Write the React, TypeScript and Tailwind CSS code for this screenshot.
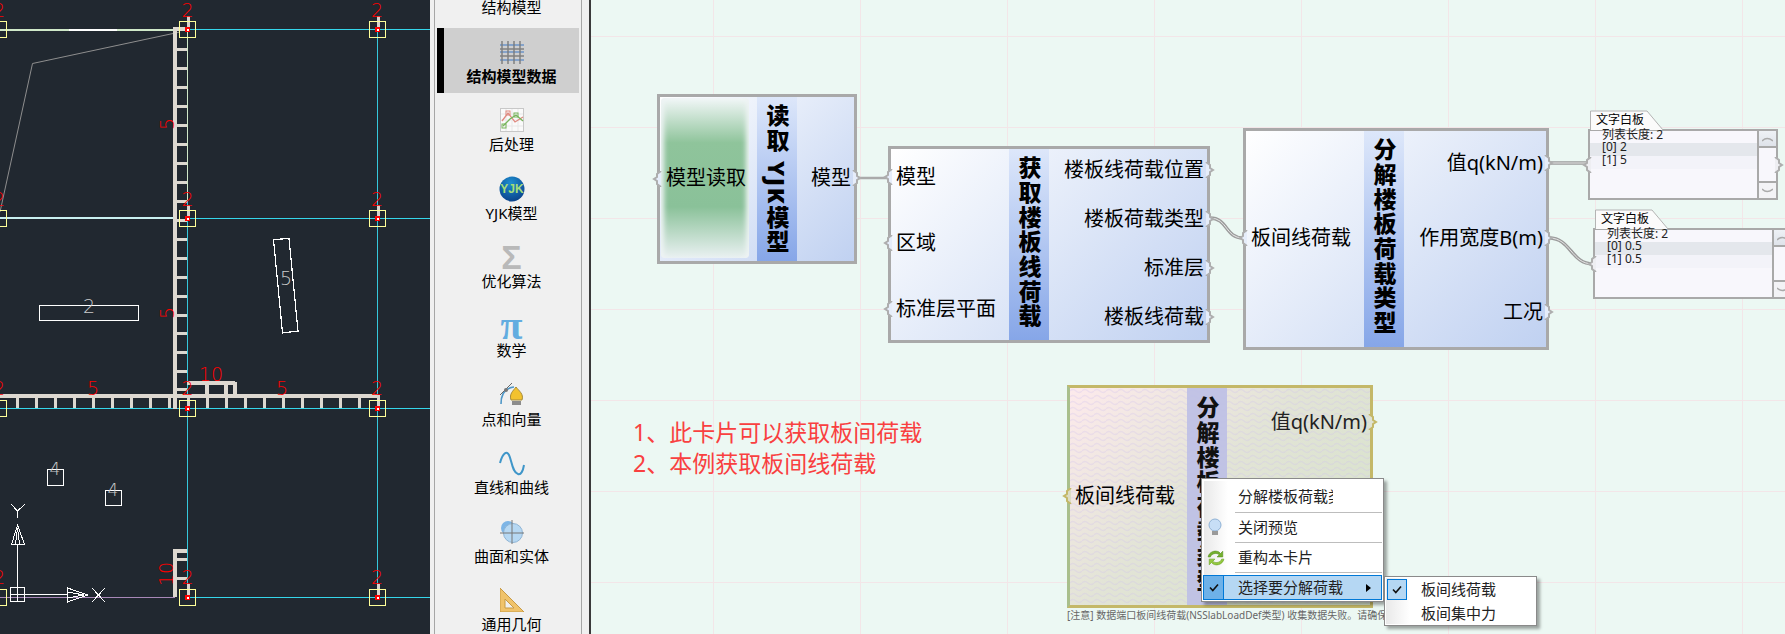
import React from 'react';

const FONT = "font-['Noto_Sans','Noto_Sans_CJK_SC',sans-serif]";

const Notch = ({ side, fill = '#e6edfa', stroke = '#aeaeae' }: { side: 'l' | 'r'; fill?: string; stroke?: string }) => (
  <svg
    width="10"
    height="16"
    viewBox="0 0 10 16"
    className={side === 'r' ? 'absolute right-[-8px] top-1/2 -translate-y-1/2' : 'absolute left-[-8px] top-1/2 -translate-y-1/2 -scale-x-100'}
  >
    <path d="M1 0 L5 3 V6 L8 8 L5 10 V13 L1 16" fill={fill} stroke={stroke} strokeWidth="2" />
  </svg>
);

const Port = ({ label, side, h, fill, stroke }: { label: string; side: 'l' | 'r'; h: string; fill?: string; stroke?: string }) => (
  <div className={`relative flex shrink-0 items-center text-[20px] leading-none text-black ${h} ${side === 'r' ? 'justify-end pr-[3px]' : 'justify-start pl-[5px]'}`}>
    <span className="whitespace-nowrap">{label}</span>
    <Notch side={side} fill={fill} stroke={stroke} />
  </div>
);

const Strip = ({ text }: { text: string }) => (
  <div className="flex w-[40px] shrink-0 justify-center bg-[linear-gradient(to_bottom,#dde7fa,#86a6e8)] pt-[7px]">
    <span className="text-[23px] font-black leading-[30px] tracking-[1.7px] text-black [writing-mode:vertical-rl]">{text}</span>
  </div>
);

const NODE = 'absolute flex border-[3px] border-[#a9a9a9] bg-[linear-gradient(135deg,#ffffff,#c0d1f1)]';
const COL = 'flex flex-col justify-center pb-[3px]';

const Wire = ({ d }: { d: string }) => (
  <g fill="none">
    <path d={d} stroke="#9c9c9c" strokeWidth="3.5" />
    <path d={d} stroke="#e8e8e8" strokeWidth="1" />
  </g>
);

const Canvas = () => (
  <div className={`relative h-full flex-1 overflow-hidden bg-[#ecf8f3] bg-[linear-gradient(#f3e6e8_1px,transparent_1px),linear-gradient(90deg,#f3e6e8_1px,transparent_1px)] bg-[size:147px_91px] bg-[position:122px_36px] ${FONT}`}>
    <svg width="1194" height="634" className="absolute left-0 top-0">
      <path d="M266 178 H297" fill="none" stroke="#aaaaaa" strokeWidth="2.5" />
      <Wire d="M619 218 C637 218 634 238 652 238" />
      <Wire d="M958 163 H997" />
      <Wire d="M958 238 C980 238 980 264 1002 264" />
    </svg>

    {/* 读取YJK模型 */}
    <div className={`${NODE} left-[66px] top-[94px] h-[170px] w-[200px]`}>
      <div className="relative flex w-[97px] shrink-0 items-center pb-[3px]">
        <div className="absolute bottom-[3px] left-[1px] top-[1px] w-[88px] rounded-[4px] bg-[linear-gradient(to_bottom,#f2f7f8,#8fc49b_28%,#8ac199_68%,#eaf1f2)] shadow-[inset_6px_0_5px_-3px_#eef3f4,inset_-6px_0_5px_-3px_#eef3f4]" />
        <span className="relative whitespace-nowrap pl-[6px] text-[20px] leading-none text-black">模型读取</span>
        <Notch side="l" />
      </div>
      <Strip text="读取 YJK模型" />
      <div className={`${COL} flex-1`}>
        <Port label="模型" side="r" h="h-[40px]" />
      </div>
    </div>

    {/* 获取楼板线荷载 */}
    <div className={`${NODE} left-[297px] top-[146px] h-[197px] w-[322px]`}>
      <div className={`${COL} w-[118px] shrink-0`}>
        <Port label="模型" side="l" h="h-[66px]" />
        <Port label="区域" side="l" h="h-[66px]" />
        <Port label="标准层平面" side="l" h="h-[66px]" />
      </div>
      <Strip text="获取楼板线荷载" />
      <div className={`${COL} flex-1`}>
        <Port label="楼板线荷载位置" side="r" h="h-[49px]" />
        <Port label="楼板荷载类型" side="r" h="h-[49px]" />
        <Port label="标准层" side="r" h="h-[49px]" />
        <Port label="楼板线荷载" side="r" h="h-[49px]" />
      </div>
    </div>

    {/* 分解楼板荷载类型 */}
    <div className={`${NODE} left-[652px] top-[128px] h-[222px] w-[306px]`}>
      <div className={`${COL} w-[118px] shrink-0`}>
        <Port label="板间线荷载" side="l" h="h-[74px]" />
      </div>
      <Strip text="分解楼板荷载类型" />
      <div className={`${COL} flex-1`}>
        <Port label="值q(kN/m)" side="r" h="h-[74.5px]" />
        <Port label="作用宽度B(m)" side="r" h="h-[74.5px]" />
        <Port label="工况" side="r" h="h-[74.5px]" />
      </div>
    </div>

    <TextPanel className="left-[997px] top-[129px] w-[190px]" rows={['[0] 2', '[1] 5']} />
    <TextPanel className="left-[1002px] top-[228px] w-[200px]" rows={['[0] 0.5', '[1] 0.5']} />

    {/* 红色说明文字 */}
    <div className="absolute left-[42px] top-[417px] text-[23px] leading-[30.5px] text-[#f94040]">
      <div>1、此卡片可以获取板间荷载</div>
      <div>2、本例获取板间线荷载</div>
    </div>

    {/* 预览中的卡片 */}
    <div className="absolute left-[476px] top-[385px] flex h-[223px] w-[306px] border-[3px] border-[#c4b868] border-l-[#a9bf8c] bg-[linear-gradient(135deg,#fdeaec,#e2e4d6_45%,#d5e2c9)]">
      <svg className="absolute inset-0 h-full w-full">
        <defs>
          <pattern id="wave" width="12" height="6" patternUnits="userSpaceOnUse">
            <path d="M0 3 Q3 0 6 3 T12 3" fill="none" stroke="#cdbcec" strokeOpacity="0.28" strokeWidth="1.4" />
          </pattern>
        </defs>
        <rect width="100%" height="100%" fill="url(#wave)" />
      </svg>
      <div className="relative flex w-[117px] shrink-0 flex-col">
        <Port label="板间线荷载" side="l" h="h-[215px]" fill="#dcdcc4" stroke="#c4b868" />
      </div>
      <div className="relative flex w-[40px] shrink-0 justify-center bg-[#bcbfe6]/90 pt-[8px]">
        <span className="text-[23px] font-black leading-[30px] tracking-[1.7px] text-[#111] [writing-mode:vertical-rl]">分解楼板荷载类型</span>
      </div>
      <div className="relative flex flex-1 flex-col">
        <div className="relative flex h-[68px] items-center justify-end pr-[3px] text-[20px] leading-none text-[#222]">
          值q(kN/m)
          <Notch side="r" fill="#dfe2d2" stroke="#c4b868" />
        </div>
      </div>
    </div>
    <div className="absolute left-[476px] top-[609px] h-[13px] w-[317px] overflow-hidden whitespace-nowrap text-[10px] leading-[12px] text-[#666]">
      [注意] 数据端口板间线荷载(NSSlabLoadDef类型) 收集数据失败。请确保数据正确
    </div>

    <ContextMenu />
  </div>
);

const TextPanel = ({ className, rows }: { className: string; rows: string[] }) => (
  <div className={`absolute h-[71px] ${className}`}>
    <svg width="76" height="20" className="absolute left-[2px] top-[-19px]">
      <path d="M0.5 20 V1 H57 L73 20" fill="#fbfbfb" stroke="#b4b4b4" />
    </svg>
    <span className="absolute left-[8px] top-[-18px] text-[12px] leading-[17px] text-black">文字白板</span>
    <div className="flex h-full border-[2px] border-[#a9a9a9] bg-[#f8f7fc]">
      <div className="relative flex-1 text-[12px] leading-[13px] text-[#222]">
        <div className="h-[12px] pl-[12px]"><span className="relative -top-[3px]">列表长度: 2</span></div>
        {rows.map((row, i) => (
          <div key={row + i} className={`h-[13px] pl-[12px] ${i === 0 ? 'bg-[#e4e7ec]' : 'bg-[#f3f3f9]'}`}>
            <span className="relative -top-[3px] block">{row}</span>
          </div>
        ))}
        <Notch side="l" fill="#eeeef2" />
      </div>
      <div className="relative flex w-[19px] shrink-0 flex-col border-l-[2px] border-[#a9a9a9] bg-[#f3f3f6] text-[#999]">
        <div className="flex h-[17px] items-center justify-center border-b-[2px] border-[#a9a9a9] bg-[linear-gradient(to_bottom,#eef1f5,#dfe3ea)]">
          <svg width="11" height="6" viewBox="0 0 11 6"><path d="M0 5 Q5 0 11 5" fill="none" stroke="#aaa" strokeWidth="1.5" /></svg>
        </div>
        <div className="flex-1 bg-[#f8f7fc]" />
        <div className="flex h-[17px] items-center justify-center border-t-[2px] border-[#a9a9a9] bg-[#f3f3f6]">
          <svg width="11" height="6" viewBox="0 0 11 6"><path d="M0 1 Q5 6 11 1" fill="none" stroke="#aaa" strokeWidth="1.5" /></svg>
        </div>
        <Notch side="r" fill="#eeeef2" />
      </div>
    </div>
  </div>
);

const Check = () => (
  <svg width="10" height="9" viewBox="0 0 10 9"><path d="M1 4.5 L3.8 7.5 L9 1.5" fill="none" stroke="#111" strokeWidth="1.6" /></svg>
);

const ContextMenu = () => (
  <>
    <div className="absolute left-[610px] top-[478px] w-[183px] border border-[#8a8a8a] bg-white p-[1px] text-[15px] leading-none text-[#222] shadow-[3px_3px_3px_rgba(0,0,0,0.35)]">
      <div className="absolute bottom-[2px] left-[2px] top-[2px] w-[24px] bg-[linear-gradient(to_right,#e9e9e9,#ffffff)]" />
      <div className="relative flex h-[32px] items-center pl-[35px]">
        <span className="w-[95px] overflow-hidden whitespace-nowrap">分解楼板荷载类型</span>
      </div>
      <div className="relative ml-[32px] h-[1px] bg-[#bdbdbd]" />
      <div className="relative flex h-[29px] items-center pl-[35px]">
        <svg width="16" height="18" viewBox="0 0 16 18" className="absolute left-[4px] top-[5px]">
          <circle cx="8" cy="7" r="6" fill="#c7def6" stroke="#8fb2d6" />
          <rect x="5" y="13" width="6" height="4" fill="#9a9a9a" />
        </svg>
        关闭预览
      </div>
      <div className="relative ml-[32px] h-[1px] bg-[#bdbdbd]" />
      <div className="relative flex h-[29px] items-center pl-[35px]">
        <svg width="18" height="18" viewBox="0 0 16 16" className="absolute left-[4px] top-[6px]">
          <path d="M1 7 C2 2 9 0 12 4 L14 2 V7 H9 L11 5 C8 3 4 4 3 7 Z" fill="#74b02f" stroke="#5d9424" strokeWidth="0.6" />
          <path d="M15 9 C14 14 7 16 4 12 L2 14 V9 H7 L5 11 C8 13 12 12 13 9 Z" fill="#95c93f" stroke="#6da52a" strokeWidth="0.6" />
        </svg>
        重构本卡片
      </div>
      <div className="relative ml-[32px] h-[1px] bg-[#bdbdbd]" />
      <div className="relative mt-[2px] flex h-[25px] items-center border-[1px] border-[#0078d7] bg-[#b5d7f3] pl-[34px]">
        <div className="absolute bottom-[-1px] left-[-1px] top-[-1px] flex w-[21px] items-center justify-center border-[1px] border-[#0078d7] bg-[#6eb1e8]">
          <Check />
        </div>
        选择要分解荷载
        <span className="absolute right-[10px] top-[8px] h-0 w-0 border-y-[4px] border-l-[5px] border-y-transparent border-l-black" />
      </div>
    </div>
    <div className="absolute left-[793px] top-[576px] h-[50px] w-[153px] border border-[#8a8a8a] bg-white text-[15px] leading-none text-[#222] shadow-[3px_3px_3px_rgba(0,0,0,0.35)]">
      <div className="absolute bottom-[1px] left-[1px] top-[1px] w-[24px] bg-[linear-gradient(to_right,#e9e9e9,#ffffff)]" />
      <div className="relative flex h-[24px] items-center pl-[36px]">
        <div className="absolute left-[2px] top-[2px] flex h-[21px] w-[20px] items-center justify-center border-[1px] border-[#0078d7] bg-[#b5d7f3]">
          <Check />
        </div>
        板间线荷载
      </div>
      <div className="relative flex h-[25px] items-center pl-[36px]">板间集中力</div>
    </div>
  </>
);

/* 左侧结构模型视图 */
const Sq = ({ x, y }: { x: number; y: number }) => (
  <g>
    <rect x={x - 0.5} y={y - 13} width="3" height="13" fill="#d8d4ce" />
    <rect x={x - 8} y={y - 8} width="16" height="16" fill="none" stroke="#ffff99" />
    <rect x={x - 2} y={y - 2} width="5" height="5" fill="#ff0000" />
    <rect x={x} y={y} width="1.5" height="1.5" fill="#ffffff" />
  </g>
);

const Num = ({ x, y, t, r, fill = '#ff0000', size = 19 }: { x: number; y: number; t: string; r?: number; fill?: string; size?: number }) => (
  <text
    x={x}
    y={y}
    fontSize={size}
    fontFamily="'DejaVu Sans', sans-serif"
    fontWeight="200"
    textAnchor="middle"
    fill={fill}
    transform={r ? `rotate(${r} ${x} ${y - 6})` : undefined}
  >
    {t}
  </text>
);

const BEAM = '#ddd8d0';

const Cad = () => {
  const vRungs = [48, 67, 86, 105, 124, 143, 162, 181, 200, 219, 238, 257, 276, 295, 314, 332, 351, 370, 388];
  const hRungs = [17, 36, 55, 74, 93, 112, 131, 150, 169, 207, 226, 245, 264, 283, 302, 321, 340, 359];
  return (
    <svg width="430" height="634" viewBox="0 0 430 634" className="block h-full w-[430px] shrink-0 bg-[#212830]" shapeRendering="crispEdges">
      <g fill="none">
        <path d="M187.5 29.5 H430 M187.5 218.5 H430 M0 408.5 H430 M187.5 597.5 H430" stroke="#35d6ea" />
        <path d="M377.5 29 V597 M187.5 200 V597" stroke="#35c8dc" />
        <path d="M0 29.5 H175" stroke="#cfe8c8" strokeWidth="2" />
        <path d="M69 29.5 H117" stroke="#ffffff" strokeWidth="2" />
        <path d="M0 217.5 H175" stroke="#c8f0f0" strokeWidth="2" />
        <path d="M0 597.5 H175" stroke="#a888b8" strokeWidth="1.5" />
        <path d="M187.5 29 V200" stroke="#cfe8c8" />
        <path d="M180 32 L32.5 63.5 L0 212" stroke="#8e8e8e" shapeRendering="auto" />
      </g>

      <rect x="173" y="27" width="4" height="382" fill={BEAM} />
      {vRungs.map((y) => (
        <rect key={y} x="177" y={y} width="10" height="3" fill={BEAM} />
      ))}
      <rect x="173" y="27" width="14" height="4" fill={BEAM} />
      <rect x="0" y="394" width="377" height="3.5" fill={BEAM} />
      {hRungs.map((x) => (
        <rect key={x} x={x - 1.5} y="397" width="3.5" height="11" fill={BEAM} />
      ))}
      <rect x="187" y="381" width="48" height="3.5" fill={BEAM} />
      <rect x="233" y="382" width="4" height="13" fill={BEAM} />
      <rect x="205" y="384" width="3.5" height="11" fill={BEAM} />
      <rect x="224" y="384" width="3.5" height="11" fill={BEAM} />
      <rect x="173" y="549" width="4" height="48" fill={BEAM} />
      <rect x="173" y="549" width="14" height="3.5" fill={BEAM} />
      <rect x="177" y="558" width="10" height="3" fill={BEAM} />
      <rect x="177" y="577" width="10" height="3" fill={BEAM} />

      {[29, 218, 408, 597].map((y) =>
        [187, 377].map((x) => <Sq key={`${x}-${y}`} x={x} y={y} />),
      )}
      {[29, 218, 408, 597].map((y) => (
        <rect key={y} x="-9" y={y - 8} width="15.5" height="16" fill="none" stroke="#ffff99" />
      ))}

      {[17, 206, 395, 584].map((y) => (
        <g key={y}>
          <Num x={187.5} y={y} t="2" />
          <Num x={377} y={y} t="2" />
          <Num x={-1} y={y} t="2" />
        </g>
      ))}
      <Num x={168} y={130} t="5" r={-90} />
      <Num x={168} y={319} t="5" r={-90} />
      <Num x={93} y={395} t="5" />
      <Num x={282} y={395} t="5" />
      <Num x={211} y={381} t="10" />
      <Num x={167} y={580} t="10" r={-90} />

      <g fill="none" stroke="#ffffff">
        <rect x="39.5" y="305.5" width="99" height="15" />
        <path d="M273.5 239.5 L289 238.5 L298 331 L282.5 333 Z" strokeWidth="1.2" />
        <rect x="47.5" y="469.5" width="16" height="16" />
        <rect x="105.5" y="490.5" width="16" height="15" />
        <path d="M11 504 L17.5 511 L25 504 M17.5 511 V518" />
        <path d="M17.5 545 V594" />
        <path d="M17.5 525 L11.5 544.5 H24.5 Z M15.5 544 L17.5 528 L19.5 544" />
        <rect x="10.5" y="587.5" width="14" height="14" />
        <path d="M17.5 587 V601 M10 594.5 H68" />
        <path d="M67.5 588 V602 L88 595 Z M67.5 592 L84 595 L67.5 598" />
        <path d="M92 588 L105 602 M105 588 L92 602" />
      </g>
      <Num x={89} y={313} t="2" fill="#cccccc" />
      <Num x={286} y={285} t="5" fill="#cccccc" />
      <Num x={55} y={475} t="4" fill="#cccccc" size={17} />
      <Num x={113} y={496} t="4" fill="#cccccc" size={17} />
    </svg>
  );
};

/* 工具栏图标 */
const GridIcon = () => (
  <svg width="24" height="24" viewBox="0 0 24 24">
    <g stroke="#6d95c9" strokeWidth="1.5"><path d="M0 5 H24 M0 12 H24 M0 20 H24" /></g>
    <g stroke="#7a7a7a" strokeWidth="1.5" opacity="0.9"><path d="M2 1 V24 M8 1 V24 M14 1 V24 M20 1 V24 M0 9 H24 M0 16 H24" /></g>
  </svg>
);
const ChartIcon = () => (
  <svg width="24" height="24" viewBox="0 0 24 24">
    <rect x="0.5" y="0.5" width="23" height="23" fill="#fafafa" stroke="#c8c8c8" />
    <path d="M6 1 V23 M12 1 V23 M18 1 V23 M1 6 H23 M1 12 H23 M1 18 H23" stroke="#e8e8e8" />
    <path d="M2 13 L8 5 L15 14 L23 9" fill="none" stroke="#e08a80" strokeWidth="1.3" />
    <path d="M3 18 L10 11 L16 7 L23 13" fill="none" stroke="#77b45a" strokeWidth="1.3" />
    <rect x="6" y="3" width="4" height="4" fill="none" stroke="#e08a80" />
    <rect x="14" y="5" width="4" height="4" fill="none" stroke="#77b45a" />
    <rect x="2" y="16" width="4" height="4" fill="none" stroke="#77b45a" />
  </svg>
);
const YjkIcon = () => (
  <svg width="26" height="26" viewBox="0 0 26 26">
    <defs>
      <radialGradient id="yjk" cx="45%" cy="25%" r="80%"><stop offset="0" stopColor="#1d8ed0" /><stop offset="1" stopColor="#0a3f88" /></radialGradient>
    </defs>
    <circle cx="13" cy="13" r="12.5" fill="url(#yjk)" />
    <text x="13" y="17" fontSize="12" fontWeight="700" textAnchor="middle" fontFamily="'Liberation Sans', sans-serif" fill="#a4dd7a">YJK</text>
  </svg>
);
const SurfaceIcon = () => (
  <svg width="24" height="24" viewBox="0 0 24 24">
    <circle cx="8" cy="8" r="7" fill="#7db5e6" />
    <circle cx="13" cy="13" r="9.5" fill="#b6d8f3" stroke="#8fb4d4" />
    <path d="M12 0 V24 M0 13 H24" stroke="#777" />
  </svg>
);
const PenIcon = () => (
  <svg width="26" height="26" viewBox="0 0 26 26">
    <path d="M2 22 C2 12 6 6 15 5" fill="none" stroke="#4f97c7" strokeWidth="1.6" />
    <path d="M1 13 L13 1" stroke="#666" />
    <circle cx="7" cy="8" r="2" fill="#777" />
    <path d="M17 5 C20 9 25 12 23 18 H12 C10 12 14 9 17 5 Z" fill="#f2c22e" stroke="#a68b3a" />
    <rect x="13" y="19" width="9" height="4" fill="#8c8c8c" />
  </svg>
);
const SineIcon = () => (
  <svg width="26" height="26" viewBox="0 0 26 26">
    <path d="M1 13 C4 2 8 1 10 5 C13 11 13 22 19 24 C22 25 24 21 25 15" fill="none" stroke="#3f96c9" strokeWidth="2" />
  </svg>
);
const RulerIcon = () => (
  <svg width="24" height="24" viewBox="0 0 24 24">
    <path fillRule="evenodd" d="M0 0 L24 24 H0 Z M5 11 V20 H14 Z" fill="#f0c36b" stroke="#c79a45" />
  </svg>
);

const items: { label: string; icon: React.ReactNode; active?: boolean }[] = [
  { label: '结构模型', icon: <div className="h-[24px]" /> },
  { label: '结构模型数据', icon: <GridIcon />, active: true },
  { label: '后处理', icon: <ChartIcon /> },
  { label: 'YJK模型', icon: <YjkIcon /> },
  { label: '优化算法', icon: <span className="text-[34px] font-bold leading-[24px] text-[#b9b9b9] [font-family:'Liberation_Sans']">Σ</span> },
  { label: '数学', icon: <span className="text-[40px] font-bold leading-[24px] text-[#62ace0] [font-family:'Liberation_Serif']">π</span> },
  { label: '点和向量', icon: <PenIcon /> },
  { label: '直线和曲线', icon: <SineIcon /> },
  { label: '曲面和实体', icon: <SurfaceIcon /> },
  { label: '通用几何', icon: <RulerIcon /> },
];

const Palette = () => (
  <div className={`flex h-full w-[161px] shrink-0 border-r-[2px] border-[#3a3a3a] bg-[#f0f0f0] pl-[4px] pr-[7px] ${FONT}`}>
    <div className="h-full w-[148px] overflow-hidden border-x-[1.5px] border-[#a6a6a6] pl-[2px]">
      <div className="-mt-[41px]">
        {items.map((item) => (
          <div
            key={item.label}
            className={`relative mb-[3.6px] flex h-[65px] w-[142px] flex-col items-center justify-center gap-[1px] pl-[7px] pt-[4px] ${item.active ? 'bg-[#cfcfcf] font-bold' : ''}`}
          >
            {item.active && <div className="absolute bottom-0 left-0 top-0 w-[7px] bg-black" />}
            <div className="flex h-[26px] items-center justify-center">{item.icon}</div>
            <div className="text-[15px] leading-[20px] text-black">{item.label}</div>
          </div>
        ))}
      </div>
    </div>
  </div>
);

const App = () => {
  return (
    <div className="flex h-[634px] w-[1785px] overflow-hidden">
      <Cad />
      <Palette />
      <Canvas />
    </div>
  );
};

export default App;
